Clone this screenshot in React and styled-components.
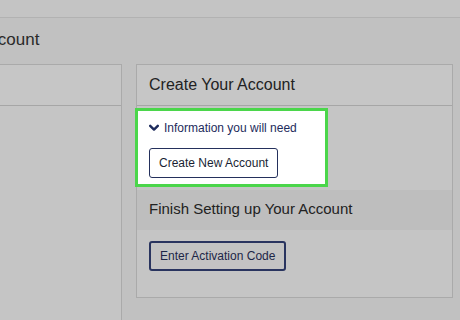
import React from "react";
import styled, { createGlobalStyle } from "styled-components";

const GlobalStyle = createGlobalStyle`
  html, body {
    margin: 0;
    padding: 0;
    background: #bfbfbf;
    font-family: "Liberation Sans", Arial, sans-serif;
  }
`;

const Page = styled.div`
  width: 460px;
  height: 320px;
  overflow: hidden;
  background: #c1c1c1;
  display: flex;
  flex-direction: column;
`;

const TopBar = styled.div`
  height: 17px;
  flex-shrink: 0;
  background: #c4c4c4;
  border-bottom: 1px solid #b2b2b2;
`;

const TitleRow = styled.div`
  height: 46px;
  flex-shrink: 0;
  display: flex;
  align-items: center;
`;

const Title = styled.h1`
  margin: 0 0 2px -22px;
  font-size: 17px;
  font-weight: normal;
  color: #2a2a2a;
`;

const Columns = styled.div`
  flex: 1;
  display: flex;
  gap: 14px;
  align-items: flex-start;
`;

const Panel = styled.div`
  background: #c5c5c5;
  border: 1px solid #aaaaaa;
  box-sizing: border-box;
  display: flex;
  flex-direction: column;
  width: ${({ $width }) => $width}px;
  height: ${({ $height }) => $height}px;
  margin-left: ${({ $offset }) => $offset || 0}px;
`;

const PanelHeader = styled.div`
  height: 40px;
  flex-shrink: 0;
  display: flex;
  align-items: center;
  padding-left: 12px;
  border-bottom: 1px solid #a6a6a6;
  background: #c6c6c6;
  font-size: 16px;
  color: #222;
`;

const Highlight = styled.div`
  margin: 2px 124px 0 -2px;
  border: 3px solid #4bd64b;
  background: #ffffff;
  padding: 10px 0 6px 11px;
  display: flex;
  flex-direction: column;
  gap: 13px;
`;

const InfoToggle = styled.div`
  display: flex;
  align-items: center;
  gap: 5px;
  font-size: 12px;
  color: #1d2b5c;
`;

const Button = styled.button`
  align-self: flex-start;
  height: 30px;
  padding: 0 9px;
  font-family: inherit;
  font-size: 12px;
  color: ${({ $muted }) => ($muted ? "#1d2647" : "#1a1f33")};
  background: ${({ $muted }) => ($muted ? "#c3c3c3" : "#ffffff")};
  border: ${({ $muted }) => ($muted ? "2px solid #29345f" : "1px solid #24305c")};
  border-radius: 3px;
`;

const SectionHeader = styled.div`
  margin-top: 3px;
  height: 40px;
  flex-shrink: 0;
  display: flex;
  align-items: center;
  padding: 0 0 3px 12px;
  box-sizing: border-box;
  background: #bebebe;
  font-size: 15px;
  color: #222;
`;

const SectionBody = styled.div`
  padding: 11px 0 0 12px;
  display: flex;
`;

const Chevron = () => (
  <svg width="10" height="8" viewBox="0 0 10 8">
    <path d="M1.2 1.8 L5 5.6 L8.8 1.8" fill="none" stroke="#1d2b5c" strokeWidth="2.4" strokeLinecap="round" strokeLinejoin="round" />
  </svg>
);

export default function App() {
  return (
    <>
      <GlobalStyle />
      <Page>
        <TopBar />
        <TitleRow>
          <Title>Account</Title>
        </TitleRow>
        <Columns>
          <Panel $width={142} $height={260} $offset={-20}>
            <PanelHeader />
          </Panel>
          <Panel $width={317} $height={234}>
            <PanelHeader>Create Your Account</PanelHeader>
            <Highlight>
              <InfoToggle>
                <Chevron />
                Information you will need
              </InfoToggle>
              <Button>Create New Account</Button>
            </Highlight>
            <SectionHeader>Finish Setting up Your Account</SectionHeader>
            <SectionBody>
              <Button $muted>Enter Activation Code</Button>
            </SectionBody>
          </Panel>
        </Columns>
      </Page>
    </>
  );
}
